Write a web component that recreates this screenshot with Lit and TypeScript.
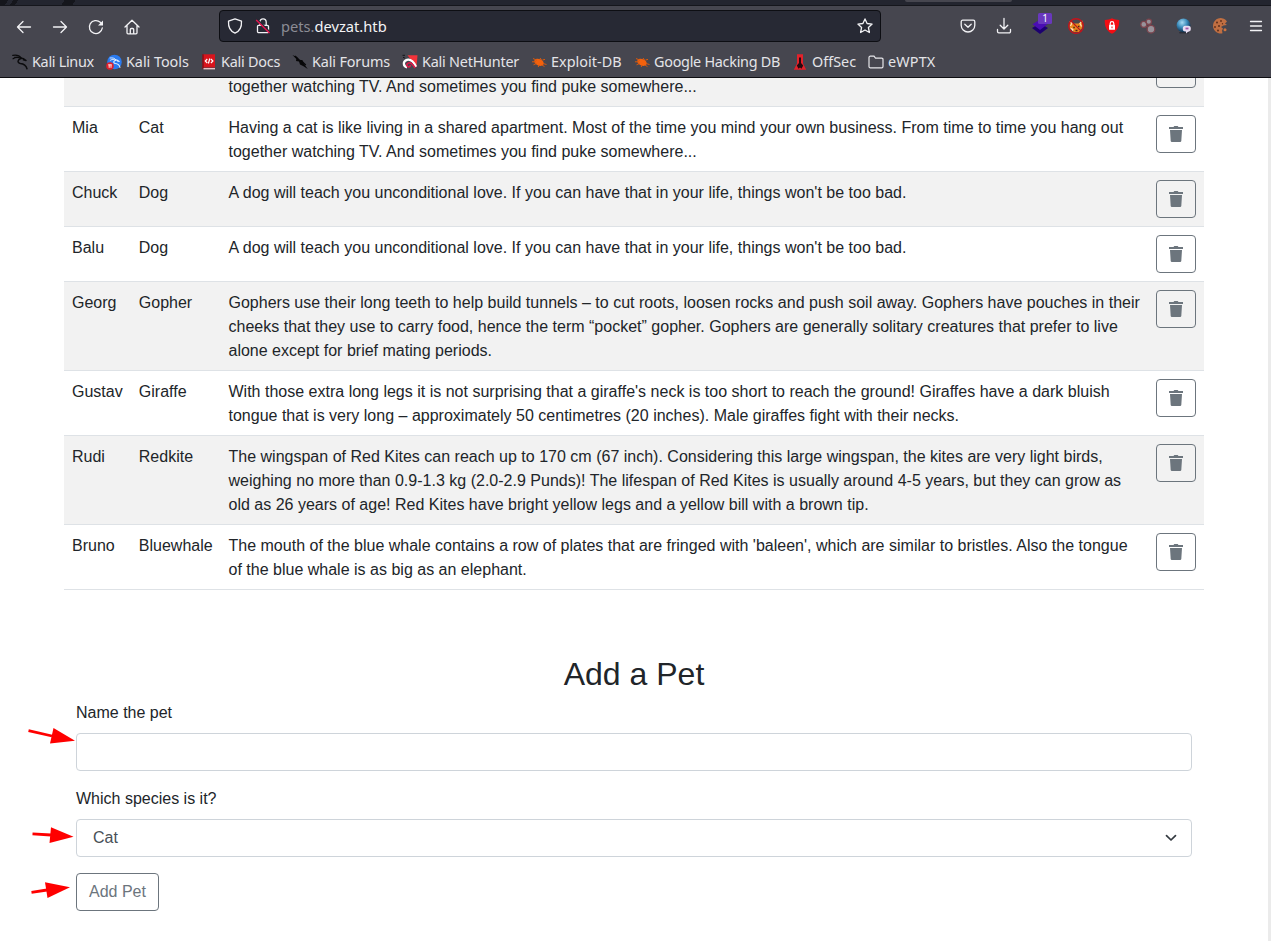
import { LitElement, html, css, svg } from "lit";
import { customElement } from "lit/decorators.js";
import { styleMap } from "lit/directives/style-map.js";

const dragon = (c: string) => svg`<g fill="none" stroke=${c} stroke-linecap="round" stroke-linejoin="round">
  <path d="M.8 1.400C4 .8 7.400 1.400 9.200 4" stroke-width="1.300"/><path d="M1 4.800C3.600 3 6.600 3.200 9 4.600" stroke-width="1.100"/><path d="M2.500 3.200l4 .2" stroke-width=".7"/>
  <path d="M8.600 4c1.800.1 3.600.7 5 2.200M14 6.400l-2.600-.6" stroke-width="1.500"/>
  <path d="M9 4.600C5.600 5.400 4.800 8.800 8.400 9.400c3.600.3 5.600 1.600 6.600 5.400" stroke-width="1.500"/></g>`;

const bug = svg`<g fill="#f2610d"><ellipse cx="8" cy="8.300" rx="5" ry="3.300" transform="rotate(24 8 8.300)"/>
  <path d="M2 4.500l4 1.800M1 7.800h4M2.500 10.800l3-1.300M9 4l1.500 2M11.500 6l2.500-.6M8 11l-.8 2M12 9.500l3.500 1M11 11l2.500 1.600" stroke="#d8590f" stroke-width="1"/></g>`;

// label, icon artwork, label width and tracking in px
const bookmarks: [string, unknown, number, number][] = [
  ["Kali Linux", dragon("#0b0b0d"), 62, -0.3],
  ["Kali Tools", svg`<circle cx="8.500" cy="8" r="7.300" fill="#2a7bf0"/><g transform="translate(3.500 3) scale(.7)">${dragon("#e4f0ff")}</g><circle cx="4" cy="12" r="3.800" fill="#e0202c"/><path d="M2.200 10.800h3.600M3.200 11v2.800M5 11v2.800" stroke="#fff" stroke-width=".9"/>`, 63, -0.04],
  ["Kali Docs", svg`<path d="M2 .300h12v13.200H2z" fill="#d9141c"/><path d="M2 .300v14.500" stroke="#8c0f18" stroke-width="1.600"/><path d="M2.500 14.700H14" stroke="#e8c3c6" stroke-width="1.400"/><path d="M6.300 5L4.300 7l2 2M9.900 5l2 2-2 2M8.800 4.500L7.400 9.500" stroke="#fff" stroke-width="1.200" fill="none"/>`, 59, -0.22],
  ["Kali Forums", svg`<path d="M.5 1l4.500 2 2.500 2.800 3 .5 1.200 3 4 5.600-4.200-2.700-3.500-1.600-1-3.200L4 7l.3-2z" fill="#070709"/><path d="M3 2l5 5M9 6.500l4.800 4.500" stroke="#070709" stroke-width="1.200"/>`, 78, -0.14],
  ["Kali NetHunter", svg`<path d="M5.500 1.300h10L14.500 13z" fill="#f3333a"/><path d="M5 13.300C1 12.500.6 7.200 5 5.800c4-1 6.500 1.500 9 7" fill="none" stroke="#fff" stroke-width="2.300"/><path d="M13 14c-2-4-4-6-6.500-5-3 1.400-1.500 4.500 1 3.800l1.200-1.500" fill="none" stroke="#d71b48" stroke-width="1.700"/><path d="M.5 1.300h2.500M1 3.200l2 1" stroke="#15151a"/>`, 97, -0.22],
  ["Exploit-DB", bug, 71, 0.03],
  ["Google Hacking DB", bug, 126, -0.27],
  ["OffSec", svg`<path d="M5 .200h6v9.300l3.200 6.200H1.800L5 9.500z" fill="#e3212a"/><path d="M7 3.500h2v5.500l2.200 2.500-1.700 3.200L8 13.500l-1.500 1.200-1.700-3.200L7 9z" fill="#260b10"/>`, 44, 0],
  ["eWPTX", svg`<path d="M1 3.500a1.300 1.300 0 0 1 1.300-1.300H6l1.500 1.900h6.200A1.300 1.300 0 0 1 15 5.400v7.100a1.300 1.300 0 0 1-1.300 1.300H2.300A1.300 1.300 0 0 1 1 12.500z" fill="none" stroke="#e6e6ea" stroke-width="1.200"/>`, 48, 0.15],
];

const catText = "Having a cat is like living in a shared apartment. Most of the time you mind your own business. From time to time you hang out together watching TV. And sometimes you find puke somewhere...";
const dogText = "A dog will teach you unconditional love. If you can have that in your life, things won't be too bad.";

const pets: [string, string, string][] = [
  ["", "", "together watching TV. And sometimes you find puke somewhere..."],
  ["Mia", "Cat", catText],
  ["Chuck", "Dog", dogText],
  ["Balu", "Dog", dogText],
  ["Georg", "Gopher", "Gophers use their long teeth to help build tunnels – to cut roots, loosen rocks and push soil away. Gophers have pouches in their cheeks that they use to carry food, hence the term “pocket” gopher. Gophers are generally solitary creatures that prefer to live alone except for brief mating periods."],
  ["Gustav", "Giraffe", "With those extra long legs it is not surprising that a giraffe's neck is too short to reach the ground! Giraffes have a dark bluish tongue that is very long – approximately 50 centimetres (20 inches). Male giraffes fight with their necks."],
  ["Rudi", "Redkite", "The wingspan of Red Kites can reach up to 170 cm (67 inch). Considering this large wingspan, the kites are very light birds, weighing no more than 0.9-1.3 kg (2.0-2.9 Punds)! The lifespan of Red Kites is usually around 4-5 years, but they can grow as old as 26 years of age! Red Kites have bright yellow legs and a yellow bill with a brown tip."],
  ["Bruno", "Bluewhale", "The mouth of the blue whale contains a row of plates that are fringed with 'baleen', which are similar to bristles. Also the tongue of the blue whale is as big as an elephant."],
];

const icon = (body: unknown) => html`<svg class="icon" viewBox="0 0 16 16">${body}</svg>`;
const line = (body: unknown) => svg`<g fill="none" stroke="#f2f2f5" stroke-width="1.3" stroke-linecap="round" stroke-linejoin="round">${body}</g>`;

@customElement("browser-bar")
export class BrowserBar extends LitElement {
  static styles = css`
    :host { display: block; height: 78px; box-sizing: border-box; background: #46464f; border-bottom: 1px solid #0e0e12; font-family: "Noto Sans", sans-serif; font-size: 14.67px; color: #e4e4e8; }
    .tabs { height: 6px; box-sizing: border-box; border-bottom: 1px solid #15161c; background: #23252f; display: flex; overflow: hidden; }
    .shade { width: 905px; background: linear-gradient(125deg, #15161c 0 7px, #23252f 7px 11px, #15161c 11px 15px, #23252f 15px 53px, #15161c 53px 62px, #23252f 62px); }
    .tab { width: 107px; height: 2px; background: #46464f; border-radius: 0 0 3px 3px; }
    .nav { display: flex; height: 40px; align-items: center; padding: 0 7px 0 16px; }
    .icon { width: 16px; height: 16px; display: block; flex: none; overflow: visible; }
    .left { display: flex; gap: 20px; width: 203px; padding-top: 1px; }
    .url { display: flex; align-items: center; box-sizing: border-box; width: 662px; height: 32px; padding: 0 7px; border: 1px solid #0d0e13; border-radius: 4px; background: #272934; }
    .shield { margin-right: 12px; }
    .addr { margin-left: 10px; flex: 1; color: #f4f4f6; line-height: 20px; }
    .dim { color: #8c8c95; }
    .right { display: flex; gap: 20px; margin-left: 79px; }
    .ext { position: relative; }
    .badge { position: absolute; left: 6px; top: -5px; width: 14px; height: 11px; border-radius: 1.5px; background: #6938bd; color: #fff; font-size: 10px; line-height: 11px; text-align: center; }
    .marks { display: flex; height: 31px; box-sizing: border-box; align-items: center; padding: 1px 0 0 12px; gap: 12px; white-space: nowrap; font-size: 14.4px; }
    .mark { display: flex; align-items: center; gap: 4px; line-height: 18px; }
  `;

  render() {
    return html`
      <div class="tabs"><div class="shade"></div><div class="tab"></div></div>
      <div class="nav">
        <div class="left">
          ${icon(line(svg`<path d="M14.500 8H1.500M7 2.500L1.500 8 7 13.500"/>`))}
          ${icon(line(svg`<path d="M1.500 8h13M9 2.500L14.500 8 9 13.500"/>`))}
          ${icon(svg`${line(svg`<path d="M14.300 9A6.500 6.500 0 1 1 12.300 3.300L14 5"/>`)}<path d="M15 1.500v5h-5z" fill="#f2f2f5"/>`)}
          ${icon(line(svg`<path d="M1 8l7-6.800L15 8M3 6.500v7.300a1 1 0 0 0 1 1h8a1 1 0 0 0 1-1V6.500M6.300 14.500v-4a1 1 0 0 1 1-1h1.400a1 1 0 0 1 1 1v4"/>`))}
        </div>
        <div class="url">
          <div class="shield">${icon(line(svg`<path d="M8 .800l6.500 2.400c.3 5-1.500 9.800-6.500 12-5-2.200-6.800-7-6.500-12z"/>`))}</div>
          ${icon(svg`${line(svg`<path d="M2.500 8.500a1.200 1.200 0 0 1 1.200-1.200h8.600a1.200 1.200 0 0 1 1.200 1.200v5a1.200 1.200 0 0 1-1.200 1.200H3.700a1.200 1.200 0 0 1-1.200-1.200zM4.800 7V4a3.200 3.200 0 0 1 6.400 0v3"/>`)}<path d="M2.500 1.800L15 14" stroke="#272934" stroke-width="1.500"/><path d="M1.200 2L14.500 15" stroke="#e5134f" stroke-width="1.500"/>`)}
          <div class="addr"><span class="dim">pets.</span>devzat.htb</div>
          ${icon(line(svg`<path d="M8 .9l2.100 4.600 5 .6-3.700 3.400 1 5L8 12l-4.400 2.500 1-5L.9 6.100l5-.6z"/>`))}
        </div>
        <div class="right">
          ${icon(line(svg`<path d="M2.700 2.200h10.600a1.500 1.500 0 0 1 1.500 1.500v3.500a6.800 6.800 0 0 1-13.600 0V3.700a1.500 1.500 0 0 1 1.500-1.500zM4.800 6.300L8 9.300l3.200-3"/>`))}
          ${icon(line(svg`<path d="M8 .500v10.300M4.200 7.200L8 11l3.800-3.800M1.500 11.500v2a1.300 1.300 0 0 0 1.300 1.300h10.400a1.300 1.300 0 0 0 1.300-1.300v-2"/>`))}
          <div class="ext">${icon(svg`<path d="M0 10l8-4.500 8 4.500-8 6z" fill="#1d0070"/><path d="M.5 6.300L8 1.500l7.500 4.800L8 12z" fill="#4a0db3"/>`)}<span class="badge">1</span></div>
          ${icon(svg`<path d="M1.500 3l4 2.500h5l4-3v7l-3.500 4.500H6L1.500 10z" fill="#e9861b"/><path d="M2 9.500l3.500 1.500L5 13.500z" fill="#ffe5cb"/><path d="M2 3.500L4 5 2.500 8M14 3l-2 2.500 1.500 3" stroke="#ffe0bd" stroke-width="1.200" fill="none"/><path d="M5.300 9.500h1.500M10 8.500h1.500M7.500 12.500h2" stroke="#42251c" stroke-width="1.500"/><circle cx="8" cy="8" r="7.300" fill="none" stroke="#c4141b" stroke-width="1.400"/><path d="M3 3l10.200 10.200" stroke="#b8161d" stroke-width="1.200"/>`)}
          ${icon(svg`<path d="M8 .3c2 1.300 4.500 1.700 7.200 1.700.300 6-1.500 11-7.200 13.800C2.300 13 .500 8 .8 2 3.500 2 6 1.600 8 .3z" fill="#f30d13"/><rect x="5" y="6.800" width="6" height="4.900" rx=".5" fill="#fff"/><path d="M6.200 7V5.500a1.800 1.800 0 0 1 3.600 0V7" fill="none" stroke="#fff" stroke-width="1.200"/><path d="M8 8.500v1.700" stroke="#f30d13"/>`)}
          ${icon(svg`<g fill="#98929a" stroke="#7b444d" stroke-width="1.300"><path d="M4 6.800l6.500 4M8.500 4.500l2 6"/><circle cx="3.800" cy="6.400" r="3"/><circle cx="8.800" cy="3.800" r="2.700"/><circle cx="11" cy="11.200" r="3.800"/></g>`)}
          ${icon(svg`<defs><radialGradient id="globe" cx=".4" cy=".3" r=".7"><stop offset="0" stop-color="#a8daf2"/><stop offset=".5" stop-color="#3d8dbc"/><stop offset="1" stop-color="#0d2d4d"/></radialGradient></defs><ellipse cx="8" cy="14.700" rx="5" ry=".9" fill="#2c2e38"/><circle cx="7.500" cy="7.300" r="6.900" fill="url(#globe)"/><rect x="6.800" y="7.800" width="8" height="5.600" rx="2.500" fill="#e8ddf2"/><path d="M10 13v2.500l3-2.500z" fill="#e8ddf2"/><path d="M9.500 10.500h3" stroke="#a255a9" stroke-width="1.800"/>`)}
          ${icon(svg`<path d="M13.500 1.800A7.700 7.700 0 1 0 10.500 15.300L10 12.500l1-2-2-1.500 2.500-1.500 3.500-.5-2-1.500 2-2z" fill="#c06f42"/><g fill="#5e2f1c"><circle cx="5" cy="4.500" r="1"/><circle cx="9" cy="3" r=".9"/><circle cx="3" cy="9" r=".9"/><circle cx="7" cy="8" r="1"/><circle cx="6" cy="12.500" r="1"/><circle cx="10.500" cy="5.700" r=".7"/></g><circle cx="13" cy="11.700" r="1.500" fill="#d0743f"/>`)}
          ${icon(line(svg`<path d="M2.500 3.500h11M2.500 8h11M2.500 12.500h11"/>`))}
        </div>
      </div>
      <div class="marks">
        ${bookmarks.map(([label, art, width, track]) => html`<div class="mark">${icon(art)}<span style=${styleMap({ width: `${width}px`, letterSpacing: `${track}px` })}>${label}</span></div>`)}
      </div>
    `;
  }
}

@customElement("app-root")
export class AppRoot extends LitElement {
  static styles = css`
    :host { display: block; position: relative; width: 1271px; height: 941px; overflow: hidden; background: #fff; font: 16px/24px "Liberation Sans", Arial, sans-serif; color: #212529; }
    .page { height: 863px; box-sizing: border-box; overflow: hidden; border-right: 3px solid #ebebeb; padding: 0 64px; }
    .pets { margin-top: -36px; width: 1140px; table-layout: fixed; border-collapse: separate; border-spacing: 0; }
    .name { width: 66.8px; }
    .species { width: 89.7px; }
    .act { width: 56px; }
    td { padding: 9px 8px 7px; vertical-align: top; border-bottom: 1px solid #dee2e6; box-sizing: border-box; }
    .text { letter-spacing: 0.007px; }
    .tools { padding: 8px; }
    .odd { background: #f2f2f2; }
    .first td { height: 65px; vertical-align: bottom; }
    .first .tools { vertical-align: top; }
    .btn { display: flex; align-items: center; justify-content: center; box-sizing: border-box; height: 38px; border: 1px solid #6c757d; border-radius: 4px; background: transparent; color: #6c757d; font: inherit; padding: 0 12px; }
    .del { width: 40px; padding: 0; }
    .trash { width: 14px; height: 16px; display: block; }
    .form { padding: 0 12px; }
    .title { margin: 64.600px 0 8px; font-size: 32px; line-height: 38.400px; font-weight: 400; text-align: center; }
    .label { display: block; margin-bottom: 8px; }
    .field { display: flex; align-items: center; justify-content: space-between; box-sizing: border-box; width: 100%; height: 38px; margin: 0 0 16px; border: 1px solid #ced4da; border-radius: 4px; background: #fff; padding: 0 12px 0 16px; font: inherit; color: #495057; }
    .chev { width: 16px; height: 12px; }
    .arrows { position: absolute; left: 0; top: 720px; width: 80px; height: 190px; }
  `;

  render() {
    return html`
      <browser-bar></browser-bar>
      <div class="page">
        <table class="pets">
          <colgroup><col class="name" /><col class="species" /><col /><col class="act" /></colgroup>
          <tbody>
            ${pets.map(([name, species, text], i) => html`
              <tr class=${i === 0 ? "odd first" : i % 2 ? "even" : "odd"}>
                <td>${name}</td><td>${species}</td><td class="text">${text}</td>
                <td class="tools"><button class="btn del" aria-label="Delete">
                  <svg class="trash" viewBox="0 0 14 16" fill="#6c757d"><path d="M0 1h4.500L5.300.100h3.400l.8.900H14V2.900H0zM1 4h12l-.7 10.900a1.200 1.200 0 0 1-1.200 1.100H2.900a1.200 1.200 0 0 1-1.200-1.100z"/></svg>
                </button></td>
              </tr>`)}
          </tbody>
        </table>
        <div class="form">
          <h2 class="title">Add a Pet</h2>
          <label class="label" for="pet">Name the pet</label>
          <input class="field" id="pet" />
          <span class="label">Which species is it?</span>
          <div class="field"><span>Cat</span>
            <svg class="chev" viewBox="0 0 16 12"><path d="M3.500 3.600L8 8l4.500-4.400" fill="none" stroke="#343a40" stroke-width="1.700" stroke-linecap="round" stroke-linejoin="round"/></svg>
          </div>
          <button class="btn">Add Pet</button>
        </div>
      </div>
      <svg class="arrows" viewBox="0 720 80 190" fill="#f00" stroke="#f00">
        <path d="M28.500 730.700L52 736" stroke-width="2.800"/><path d="M53.500 728L75 740.700 50 743.500z" stroke="none"/>
        <path d="M32.500 833.800L51 835" stroke-width="2.800"/><path d="M51 827.300L73.500 836.700 49.500 843z" stroke="none"/>
        <path d="M31.500 892.300L47 890" stroke-width="2.800"/><path d="M45 882.300L70 887.300 47.500 898z" stroke="none"/>
      </svg>
    `;
  }
}
